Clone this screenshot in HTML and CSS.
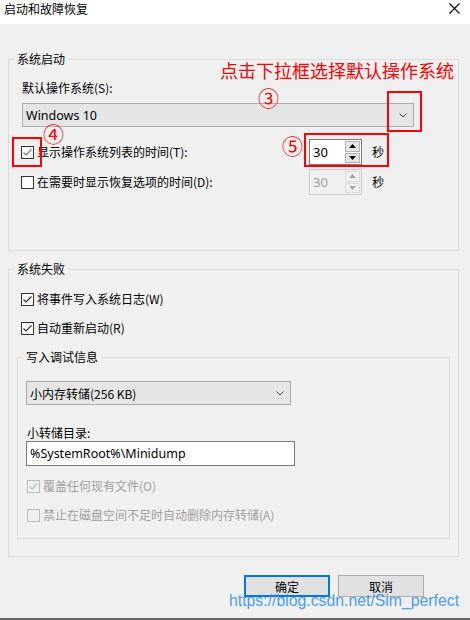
FILE: index.html
```html
<!DOCTYPE html>
<html lang="zh-CN">
<head>
<meta charset="utf-8">
<title>启动和故障恢复</title>
<link rel="stylesheet" href="styles.css">
</head>
<body>
<div class="window">
  <div class="titlebar">
    <span class="title">启动和故障恢复</span>
    <svg class="close" width="11" height="11" viewBox="0 0 11 11"><path d="M0.5 0.5 L10.5 10.5 M10.5 0.5 L0.5 10.5" stroke="#000" stroke-width="1.1" fill="none"/></svg>
  </div>
  <div class="content">
    <fieldset class="group g1">
      <legend>系统启动</legend>
      <div class="g1-body">
        <div class="label">默认操作系统(S):</div>
        <div class="combo combo-os"><span>Windows 10</span><svg class="chev" width="8" height="5" viewBox="0 0 8 5"><path d="M0.5 0.5 L4 4 L7.5 0.5" stroke="#444" stroke-width="1" fill="none"/></svg></div>
        <div class="timerow">
          <div class="check"><span class="cb on soft"><svg width="11" height="11" viewBox="0 0 11 11"><path d="M1.5 5.5 L4 8 L9.5 2.5" stroke="currentColor" stroke-width="1.2" fill="none"/></svg></span><span>显示操作系统列表的时间(T):</span></div>
          <div class="spin">
            <span class="spin-val">30</span>
            <span class="spin-btns"><span class="sb"><svg width="7" height="4" viewBox="0 0 7 4"><path d="M0 4 L3.5 0 L7 4 Z" fill="currentColor"/></svg></span><span class="sb"><svg width="7" height="4" viewBox="0 0 7 4"><path d="M0 0 L3.5 4 L7 0 Z" fill="currentColor"/></svg></span></span>
          </div>
          <span class="unit">秒</span>
        </div>
        <div class="timerow">
          <div class="check"><span class="cb"></span><span>在需要时显示恢复选项的时间(D):</span></div>
          <div class="spin disabled">
            <span class="spin-val">30</span>
            <span class="spin-btns"><span class="sb"><svg width="7" height="4" viewBox="0 0 7 4"><path d="M0 4 L3.5 0 L7 4 Z" fill="currentColor"/></svg></span><span class="sb"><svg width="7" height="4" viewBox="0 0 7 4"><path d="M0 0 L3.5 4 L7 0 Z" fill="currentColor"/></svg></span></span>
          </div>
          <span class="unit">秒</span>
        </div>
      </div>
    </fieldset>

    <fieldset class="group g2">
      <legend>系统失败</legend>
      <div class="g2-body">
        <div class="check row"><span class="cb on"><svg width="11" height="11" viewBox="0 0 11 11"><path d="M1.5 5.5 L4 8 L9.5 2.5" stroke="currentColor" stroke-width="1.2" fill="none"/></svg></span><span>将事件写入系统日志(W)</span></div>
        <div class="check row r2"><span class="cb on"><svg width="11" height="11" viewBox="0 0 11 11"><path d="M1.5 5.5 L4 8 L9.5 2.5" stroke="currentColor" stroke-width="1.2" fill="none"/></svg></span><span>自动重新启动(R)</span></div>
        <fieldset class="group g3">
          <legend>写入调试信息</legend>
          <div class="g3-body">
            <div class="combo combo-dump"><span>小内存转储(256 KB)</span><svg class="chev" width="8" height="5" viewBox="0 0 8 5"><path d="M0.5 0.5 L4 4 L7.5 0.5" stroke="#444" stroke-width="1" fill="none"/></svg></div>
            <div class="label dir-label">小转储目录:</div>
            <div class="textbox">%SystemRoot%\Minidump</div>
            <div class="check row dis d1"><span class="cb on"><svg width="11" height="11" viewBox="0 0 11 11"><path d="M1.5 5.5 L4 8 L9.5 2.5" stroke="currentColor" stroke-width="1.2" fill="none"/></svg></span><span>覆盖任何现有文件(O)</span></div>
            <div class="check row dis d2"><span class="cb"></span><span>禁止在磁盘空间不足时自动删除内存转储(A)</span></div>
          </div>
        </fieldset>
      </div>
    </fieldset>

    <div class="buttons">
      <button class="btn primary">确定</button>
      <button class="btn">取消</button>
    </div>
  </div>
  <div class="bottomline"></div>

  <div class="note note-text">点击下拉框选择默认操作系统</div>
  <div class="note num n3">③</div>
  <div class="note num n4">④</div>
  <div class="note num n5">⑤</div>
  <div class="redbox box-a"></div>
  <div class="redbox box-b"></div>
  <div class="redbox box-c"></div>
  <div class="watermark">https://blog.csdn.net/Sim_perfect</div>
</div>
</body>
</html>
```
FILE: styles.css
```css
* { box-sizing: border-box; }
html, body { margin: 0; padding: 0; }
body {
  width: 470px;
  height: 620px;
  overflow: hidden;
  font-family: "Noto Sans CJK SC", "Noto Sans", sans-serif;
  font-size: 12px;
  color: #000;
  background: #f0f0f0;
}
.window {
  position: relative;
  width: 470px;
  height: 620px;
  display: flex;
  flex-direction: column;
  background: #f0f0f0;
}
.titlebar {
  height: 24px;
  background: #fff;
  display: flex;
  justify-content: space-between;
  align-items: flex-start;
  padding-left: 4px;
  padding-right: 10px;
}
.title { line-height: 18px; }
.close { margin-top: 3px; }

.content {
  flex: 1;
  padding: 27px 11px 0 8px;
}
.group {
  margin: 0;
  padding: 0;
  min-width: 0;
  border: 1px solid #dcdcdc;
}
.group > legend {
  margin-left: 5px;
  padding: 0 3px;
  line-height: 16px;
  height: 16px;
}
.label { line-height: 16px; height: 16px; }

/* group 1 */
.g1-body { padding: 13px 44px 55px 13px; }
.combo {
  height: 24px;
  background: #e5e5e5;
  border: 1px solid #adadad;
  display: flex;
  align-items: center;
  justify-content: space-between;
  padding: 0 6px 0 3px;
}
.combo-os { margin-top: 7px; font-family: "Noto Sans", "Noto Sans CJK SC", sans-serif; font-size: 12.5px; }
.timerow {
  display: grid;
  grid-template-columns: 278px 53px auto;
  column-gap: 10px;
  align-items: center;
  height: 26px;
  margin-left: -1px;
}
.g1-body .combo + .timerow { margin-top: 12px; }
.timerow + .timerow { margin-top: 4px; }

.check {
  display: flex;
  align-items: center;
  gap: 3px;
  line-height: 16px;
}
.cb {
  width: 13px;
  height: 13px;
  border: 1px solid #333;
  background: #fff;
  color: #333;
  display: flex;
  align-items: center;
  justify-content: center;
  flex: none;
}
.cb.soft { color: #777; }
.cb svg { display: block; }

.spin {
  height: 26px;
  border: 1px solid #7a7a7a;
  background: #fff;
  display: flex;
  align-items: stretch;
}
.spin-val {
  flex: 1;
  padding-left: 3px;
  line-height: 24px;
  font-family: "Noto Sans", "Noto Sans CJK SC", sans-serif;
  font-size: 13px;
}
.spin-btns {
  width: 16px;
  display: flex;
  flex-direction: column;
  gap: 1px;
  padding: 1px 1px 1px 0;
  background: #fff;
}
.sb {
  flex: 1;
  background: #e6e6e6;
  border: 1px solid #b4b4b4;
  color: #000;
  display: flex;
  align-items: center;
  justify-content: center;
}
.sb svg { display: block; }
.spin.disabled { border-color: #cccccc; background: #f0f0f0; }
.spin.disabled .spin-val { color: #a0a0a0; }
.spin.disabled .spin-btns { background: #f0f0f0; }
.spin.disabled .sb { background: #f0f0f0; border-color: #d9d9d9; color: #a6a6a6; }
.unit { line-height: 16px; }

/* group 2 */
.g2 { margin-top: 10px; }
.g2-body { padding: 14px 8px 17px 8px; }
.row { height: 16px; margin-left: 4px; }
.row.r2 { margin-top: 13px; }
.g3 { margin-top: 13px; }
.g3-body { padding: 16px 8px 15px 8px; }
.combo-dump { width: 265px; }
.dir-label { margin-top: 20px; margin-left: 1px; }
.textbox {
  width: 269px;
  height: 25px;
  border: 1px solid #7a7a7a;
  background: #fff;
  padding-left: 3px;
  line-height: 23px;
  font-family: "Noto Sans", "Noto Sans CJK SC", sans-serif;
  font-size: 12.5px;
}
.g3-body .row { margin-left: 1px; }
.row.d1 { margin-top: 12px; }
.row.d2 { margin-top: 13px; }
.dis { color: #a0a0a0; }
.dis .cb { border-color: #bcbcbc; background: #f0f0f0; color: #bcbcbc; }

.buttons {
  display: flex;
  justify-content: flex-end;
  gap: 8px;
  margin-top: 18px;
  padding-right: 35px;
}
.btn {
  width: 86px;
  height: 22px;
  margin: 0;
  padding: 0;
  font-family: "Noto Sans CJK SC", sans-serif;
  font-size: 12px;
  color: #000;
  background: #e1e1e1;
  border: 1px solid #adadad;
}
.btn.primary { border: 2px solid #0078d7; }

.bottomline { height: 2px; background: #646464; }

/* annotations overlaid on the screenshot */
.note {
  position: absolute;
  color: #ff0000;
  white-space: nowrap;
}
.note-text { left: 220px; top: 60px; font-size: 18px; line-height: 20px; }
.num { font-size: 21px; line-height: 22px; }
.n3 { left: 258px; top: 86px; }
.n4 { left: 43px; top: 122px; }
.n5 { left: 282px; top: 134px; }
.redbox { position: absolute; border: 2px solid #ff0000; }
.box-a { left: 387px; top: 91px; width: 35px; height: 41px; }
.box-b { left: 12px; top: 137px; width: 30px; height: 30px; }
.box-c { left: 304px; top: 133px; width: 85px; height: 34px; }
.watermark {
  position: absolute;
  left: 229px;
  top: 592px;
  font-family: "Liberation Sans", Arial, sans-serif;
  font-size: 15.8px;
  line-height: 18px;
  color: rgba(40, 140, 255, 0.85);
  white-space: nowrap;
}
```
